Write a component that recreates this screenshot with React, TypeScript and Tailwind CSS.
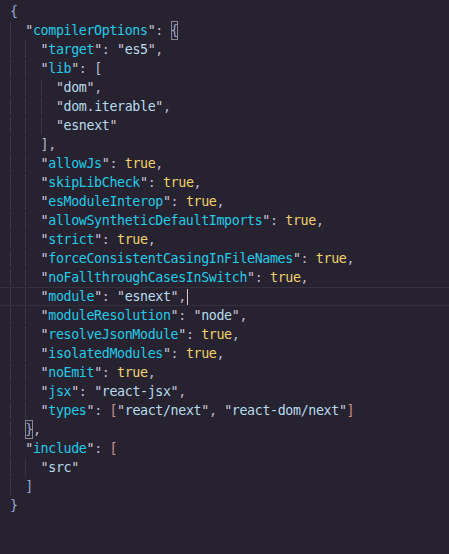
import * as React from "react";

type Tok = { t: string; c: string; box?: boolean };
type Line = { indent: number; toks: Tok[]; active?: boolean; cursor?: boolean };

const QUOTE = "text-[#cfcddb]";
const KEY = "text-[#22cbe8]";
const STR = "text-[#b8dcec]";
const BOOL = "text-[#f4d46a]";
const PUNCT = "text-[#bcb9c9]";
const BRACE = "text-[#9aa6d4]";
const BRACKET = "text-[#cf8f86]";

const key = (name: string): Tok[] => [
  { t: '"', c: QUOTE },
  { t: name, c: KEY },
  { t: '"', c: QUOTE },
  { t: ": ", c: PUNCT },
];
const str = (v: string): Tok[] => [
  { t: '"', c: QUOTE },
  { t: v, c: STR },
  { t: '"', c: QUOTE },
];
const p = (t: string, c = PUNCT): Tok => ({ t, c });
const bool = (name: string): Line => ({
  indent: 2,
  toks: [...key(name), { t: "true", c: BOOL }, p(",")],
});
const strProp = (name: string, v: string, extra: Partial<Line> = {}): Line => ({
  indent: 2,
  toks: [...key(name), ...str(v), p(",")],
  ...extra,
});

const lines: Line[] = [
  { indent: 0, toks: [p("{", BRACE)] },
  { indent: 1, toks: [...key("compilerOptions"), { t: "{", c: BRACE, box: true }] },
  strProp("target", "es5"),
  { indent: 2, toks: [...key("lib"), p("[", PUNCT)] },
  { indent: 3, toks: [...str("dom"), p(",")] },
  { indent: 3, toks: [...str("dom.iterable"), p(",")] },
  { indent: 3, toks: [...str("esnext")] },
  { indent: 2, toks: [p("]", PUNCT), p(",")] },
  bool("allowJs"),
  bool("skipLibCheck"),
  bool("esModuleInterop"),
  bool("allowSyntheticDefaultImports"),
  bool("strict"),
  bool("forceConsistentCasingInFileNames"),
  bool("noFallthroughCasesInSwitch"),
  strProp("module", "esnext", { active: true, cursor: true }),
  strProp("moduleResolution", "node"),
  bool("resolveJsonModule"),
  bool("isolatedModules"),
  bool("noEmit"),
  strProp("jsx", "react-jsx"),
  {
    indent: 2,
    toks: [
      ...key("types"),
      p("[", BRACKET),
      ...str("react/next"),
      p(", "),
      ...str("react-dom/next"),
      p("]", BRACKET),
    ],
  },
  { indent: 1, toks: [{ t: "}", c: BRACE, box: true }, p(",")] },
  { indent: 1, toks: [...key("include"), p("[", BRACKET)] },
  { indent: 2, toks: [...str("src")] },
  { indent: 1, toks: [p("]", BRACE)] },
  { indent: 0, toks: [p("}", BRACE)] },
];

export default function App() {
  return (
    <div
      className="w-[449px] h-[554px] overflow-hidden bg-[#262230] pt-[2px] text-[13.3px] tracking-[-0.36px] leading-[19px] whitespace-pre"
      style={{ fontFamily: '"DejaVu Sans Mono", "Liberation Mono", monospace' }}
    >
      {lines.map((line, i) => (
        <div
          key={i}
          className={
            line.active
              ? "flex h-[19px] pl-[10px] border-y border-[#34313d]"
              : "flex h-[19px] pl-[10px] border-y border-transparent"
          }
        >
          {Array.from({ length: line.indent }).map((_, j) => (
            <span key={j} className="w-[15.3px] shrink-0 border-l border-[#3b3846]" />
          ))}
          <span className="flex items-center">
            {line.toks.map((tok, k) => (
              <span
                key={k}
                className={
                  tok.box
                    ? `${tok.c} outline outline-1 outline-[#8a8794] -outline-offset-1`
                    : tok.c
                }
              >
                {tok.t}
              </span>
            ))}
            {line.cursor && <span className="ml-[1px] h-[16px] w-[1px] bg-[#d0d0d0]" />}
          </span>
        </div>
      ))}
    </div>
  );
}
